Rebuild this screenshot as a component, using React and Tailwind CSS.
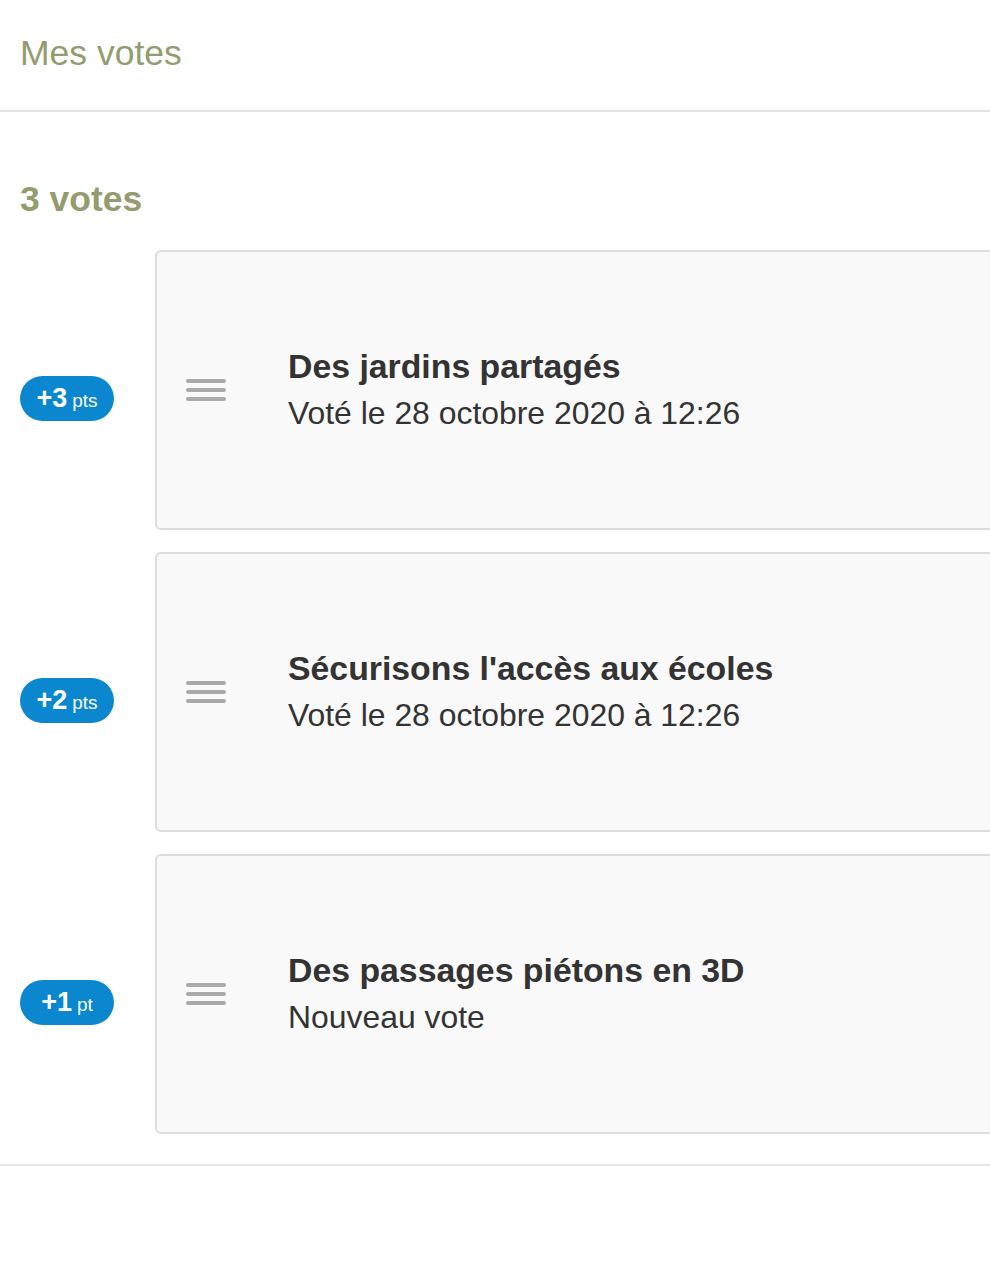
import React from 'react';

const votes = [
  { pts: '+3', unit: 'pts', title: 'Des jardins partagés', sub: 'Voté le 28 octobre 2020 à 12:26' },
  { pts: '+2', unit: 'pts', title: "Sécurisons l'accès aux écoles", sub: 'Voté le 28 octobre 2020 à 12:26' },
  { pts: '+1', unit: 'pt', title: 'Des passages piétons en 3D', sub: 'Nouveau vote' },
];

function Handle() {
  return (
    <div className="flex flex-col gap-[5px] w-[40px] shrink-0">
      <span className="block h-[4px] rounded-full bg-[#aaaaaa]" />
      <span className="block h-[4px] rounded-full bg-[#aaaaaa]" />
      <span className="block h-[4px] rounded-full bg-[#aaaaaa]" />
    </div>
  );
}

export default function App() {
  return (
    <div className="w-[990px] min-h-[1270px] bg-white overflow-hidden font-['Liberation_Sans',Arial,sans-serif]">
      <div className="h-[112px] border-b-2 border-[#e2e2e2] px-5 flex items-center pb-[3px]">
        <h1 className="text-[35.5px] leading-none text-[#939c6e]">Mes votes</h1>
      </div>

      <div className="pl-5 pt-[70px]">
        <h2 className="text-[35.5px] leading-none font-bold text-[#939c6e]">3 votes</h2>

        <div className="mt-[32px] flex flex-col gap-[22px]">
          {votes.map((v) => (
            <div key={v.title} className="flex items-center">
              {/* points badge */}
              <div className="w-[94px] h-[45px] mt-[18px] shrink-0 rounded-full bg-[#0b87cf] text-white flex items-baseline justify-center gap-[5px]">
                <span className="text-[27px] font-bold leading-[44px]">{v.pts}</span>
                <span className="text-[19px] leading-[44px]">{v.unit}</span>
              </div>

              {/* card */}
              <div className="ml-[41px] mr-[-20px] flex-1 h-[280px] border-2 border-[#dddddd] rounded-md bg-[#f9f9f9] flex items-center pl-[29px]">
                <Handle />
                <div className="ml-[62px] text-[#333333]">
                  <p className="text-[33.8px] font-bold leading-[47px]">{v.title}</p>
                  <p className="text-[31.9px] leading-[47px]">{v.sub}</p>
                </div>
              </div>
            </div>
          ))}
        </div>
      </div>

      <div className="mt-[30px] border-t-2 border-[#e5e5e5]" />
    </div>
  );
}
